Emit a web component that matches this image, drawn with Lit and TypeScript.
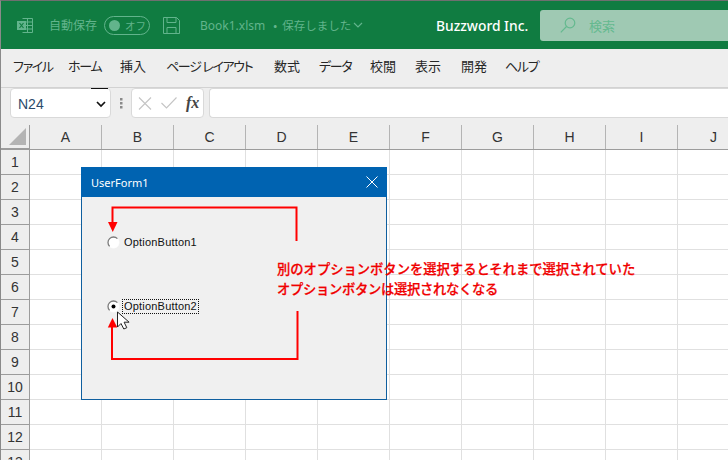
import { LitElement, html, svg, css } from "lit";
import { customElement } from "lit/decorators.js";

const COLS = ["A", "B", "C", "D", "E", "F", "G", "H", "I", "J"];
const ROWS = Array.from({ length: 13 }, (_, i) => i + 1);
const TABS = [
  ["ファイル", 55, true],
  ["ホーム", 52, true],
  ["挿入", 46, false],
  ["ページ レイアウト", 108, true],
  ["数式", 45, false],
  ["データ", 51, true],
  ["校閲", 45, false],
  ["表示", 46, false],
  ["開発", 44, false],
  ["ヘルプ", 50, true],
] as const;

@customElement("app-root")
export class AppRoot extends LitElement {
  static styles = css`
    :host {
      display: block;
      width: 728px;
      height: 460px;
      overflow: hidden;
      position: relative;
      background: #eeeeee;
      font-family: "Liberation Sans", "Noto Sans CJK JP", sans-serif;
      --faded: #62b48c;
    }
    .window {
      display: flex;
      flex-direction: column;
      height: 460px;
      border-left: 1px solid #8a8a8a;
      border-top: 1px solid #6f6f6f;
      box-sizing: border-box;
    }
    .title {
      height: 48px;
      flex: none;
      background: #107c41;
      display: flex;
      align-items: center;
      color: var(--faded);
      font-family: "Noto Sans CJK JP", sans-serif;
      font-size: 12px;
      padding-left: 16px;
      box-sizing: border-box;
    }
    .title svg { flex: none; display: block; }
    .autosave { margin-left: 15px; font-size: 12px; line-height: 16px; width: 48px; white-space: nowrap; }
    .toggle {
      margin-left: 7px;
      width: 46px;
      height: 19px;
      box-sizing: border-box;
      border: 1px solid var(--faded);
      border-radius: 10px;
      display: flex;
      align-items: center;
      padding-left: 4px;
      font-size: 10.5px;
      flex: none;
    }
    .knob { width: 11px; height: 11px; border-radius: 50%; background: var(--faded); margin-right: 5px; flex: none; }
    .save { margin-left: 13px; }
    .book { margin-left: 20px; font-size: 11.5px; white-space: nowrap; display: flex; align-items: center; width: 236px; }
    .book .bookname { font-family: "Noto Sans", sans-serif; font-size: 12px; }
    .book .bullet { margin-left: 8px; width: 9px; flex: none; }
    .book .chev { margin-left: 2px; }
    .company {
      color: #ffffff;
      font-family: "Noto Sans", sans-serif;
      font-weight: 500;
      font-size: 13.8px;
      width: 104px;
      flex: none;
      white-space: nowrap;
    }
    .search {
      flex: 1;
      height: 31px;
      background: #9fc9b3;
      border-radius: 3px 0 0 3px;
      display: flex;
      align-items: center;
      padding-left: 20px;
      gap: 13px;
      font-size: 13px;
      color: #64b98f;
    }
    .tabs {
      height: 39px;
      flex: none;
      box-sizing: border-box;
      border-bottom: 1px solid #d2d2d2;
      display: flex;
      align-items: center;
      padding: 0 0 5px 12px;
      font-family: "Noto Sans CJK JP", sans-serif;
      font-size: 13px;
      color: #262626;
      font-feature-settings: "palt";
    }
    .tab { white-space: nowrap; flex: none; }
    .tab.kana { letter-spacing: -1.3px; }
    .fbar {
      height: 30px;
      flex: none;
      display: flex;
      align-items: stretch;
      padding-left: 9px;
    }
    .namebox {
      width: 101px;
      box-sizing: border-box;
      background: #fff;
      border: 1px solid #d9d9d9;
      border-radius: 4px;
      display: flex;
      align-items: center;
      position: relative;
      padding: 2px 0 0 7px;
      font-size: 14px;
      color: #2b4a6b;
    }
    .namebox .chev { position: absolute; right: 4px; top: 12px; }
    .namebox .tick { position: absolute; right: 2px; top: -1px; width: 17px; height: 1px; background: #111; }
    .dots { width: 20px; flex: none; display: flex; align-items: center; justify-content: center; }
    .fxbox {
      width: 73px;
      box-sizing: border-box;
      background: #fff;
      border: 1px solid #d9d9d9;
      border-radius: 4px;
      display: flex;
      align-items: center;
      padding-left: 6px;
      gap: 9px;
      flex: none;
    }
    .fx {
      font-family: "Liberation Serif", serif;
      font-style: italic;
      font-weight: 700;
      font-size: 16px;
      color: #444;
    }
    .formula {
      flex: 1;
      margin-left: 5px;
      background: #fff;
      border: 1px solid #d9d9d9;
      border-right: none;
      border-radius: 4px 0 0 4px;
    }
    .sheet { flex: 1; margin-top: 7px; overflow: hidden; position: relative; background: #fff; }
    .row { display: flex; height: 25px; }
    .head { height: 25px; background: #eeeeee; border-bottom: 1px solid #9c9c9c; box-sizing: border-box; }
    .rowhead, .corner {
      width: 29px;
      flex: none;
      box-sizing: border-box;
      background: #eeeeee;
      border-right: 1px solid #9c9c9c;
      border-bottom: 1px solid #9c9c9c;
      display: flex;
      align-items: center;
      justify-content: center;
      font-size: 14px;
      color: #333;
    }
    .corner { align-items: flex-end; justify-content: flex-end; padding: 0 3px 3px 0; }
    .colhead {
      width: 72px;
      flex: none;
      box-sizing: border-box;
      border-right: 1px solid #b4b4b4;
      display: flex;
      align-items: center;
      justify-content: center;
      font-size: 14px;
      color: #333;
    }
    .cell {
      width: 72px;
      flex: none;
      box-sizing: border-box;
      border-right: 1px solid #e0e0e0;
      border-bottom: 1px solid #e0e0e0;
    }

    .form {
      position: absolute;
      left: 81px;
      top: 167px;
      width: 306px;
      height: 233px;
      box-sizing: border-box;
      border: 1px solid #0f5f9f;
      border-top: none;
      background: #f0f0f0;
    }
    .formbar {
      height: 30px;
      margin: 0 -1px;
      background: #0063b1;
      color: #fff;
      font-family: "Noto Sans", sans-serif;
      font-size: 11px;
      display: flex;
      align-items: center;
      justify-content: space-between;
      padding: 0 9px 0 10px;
    }
    .opt {
      position: absolute;
      left: 25px;
      display: flex;
      align-items: center;
      font-family: "Liberation Sans", sans-serif;
      font-size: 11px;
      letter-spacing: 0.2px;
      color: #111;
      height: 15px;
    }
    .opt1 { top: 68px; }
    .opt2 { top: 132px; }
    .radio { flex: none; display: block; }
    .opt span { margin-left: 2px; padding: 0 1px; border: 1px dotted transparent; line-height: 13px; white-space: nowrap; }
    .opt.on span { border-color: #111; }
    .overlay { position: absolute; left: 0; top: 0; pointer-events: none; }
    .note {
      position: absolute;
      left: 277px;
      top: 259px;
      color: #f00000;
      font-family: "Noto Sans CJK JP", sans-serif;
      font-weight: 500;
      font-size: 13.3px;
      line-height: 20px;
      white-space: nowrap;
      -webkit-text-stroke: 0.25px #f00000;
    }
    .note div + div { letter-spacing: -0.3px; }
  `;

  private radio(on: boolean) {
    return html`<svg class="radio" width="13" height="13" viewBox="0 0 13 13">
      <circle cx="6.500" cy="6.500" r="5.500" fill="#fff" stroke="#fff" stroke-width="1"/>
      <path d="M2.600 10.400A5.500 5.500 0 0 1 10.400 2.600" fill="none" stroke="#7a7a7a" stroke-width="1.300"/>
      ${on ? svg`<circle cx="6.500" cy="6.500" r="2" fill="#000"/>` : ""}
    </svg>`;
  }

  render() {
    return html`
      <div class="window">
        <div class="title">
          <svg width="17" height="17" viewBox="0 0 17 17" fill="none" stroke="#62b48c">
            <path d="M5.500 1.500h10v14h-10M5.500 5h10M5.500 8.500h10M5.500 12h10M10.500 1.500v14"/>
            <rect x="0" y="4" width="9" height="9" fill="#62b48c" stroke="none"/>
            <path d="M2.500 6l4 5M6.500 6l-4 5" stroke="#107c41" stroke-width="1.200"/>
          </svg>
          <div class="autosave">自動保存</div>
          <div class="toggle"><i class="knob"></i>オフ</div>
          <svg class="save" width="17" height="17" viewBox="0 0 17 17" fill="none" stroke="#62b48c">
            <path d="M0.500 0.500h13l3 3v13h-16zM4 0.500v5h9v-5M4 16.500v-6h9v6"/>
          </svg>
          <div class="book">
            <span class="bookname">Book1.xlsm</span>
            <span class="bullet">•</span>
            <span>保存しました</span>
            <svg class="chev" width="10" height="6" viewBox="0 0 10 6" fill="none" stroke="#62b48c" stroke-width="1.200"><path d="M1 1l4 4 4-4"/></svg>
          </div>
          <div class="company">Buzzword Inc.</div>
          <div class="search">
            <svg width="16" height="16" viewBox="0 0 16 16" fill="none" stroke="#64b98f" stroke-width="1.200">
              <circle cx="10" cy="6" r="4.800"/><path d="M6.500 9.500L0.800 15.300"/>
            </svg>
            <span>検索</span>
          </div>
        </div>

        <div class="tabs">
          ${TABS.map(([t, w, k]) => html`<div class="tab ${k ? "kana" : ""}" style="width:${w}px">${t}</div>`)}
        </div>

        <div class="fbar">
          <div class="namebox">
            N24
            <i class="tick"></i>
            <svg class="chev" width="10" height="7" viewBox="0 0 10 7" fill="none" stroke="#111" stroke-width="1.700"><path d="M1 1l4 4 4-4"/></svg>
          </div>
          <div class="dots">
            <svg width="3" height="11" viewBox="0 0 3 11" fill="#8a8a8a"><rect y="0" width="2.500" height="2.500"/><rect y="4" width="2.500" height="2.500"/><rect y="8" width="2.500" height="2.500"/></svg>
          </div>
          <div class="fxbox">
            <svg width="14" height="13" viewBox="0 0 14 13" fill="none" stroke="#c4c4c4" stroke-width="1.100"><path d="M1 0.500l12 12M13 0.500l-12 12"/></svg>
            <svg width="16" height="12" viewBox="0 0 16 12" fill="none" stroke="#c4c4c4" stroke-width="1.100"><path d="M0.500 6l5 5L15.500 0.500"/></svg>
            <span class="fx">fx</span>
          </div>
          <div class="formula"></div>
        </div>

        <div class="sheet">
          <div class="row head">
            <div class="corner">
              <svg width="17" height="17" viewBox="0 0 17 17"><path d="M17 0v17H0z" fill="#b4b4b4"/></svg>
            </div>
            ${COLS.map((c) => html`<div class="colhead">${c}</div>`)}
          </div>
          ${ROWS.map(
            (r) => html`<div class="row">
              <div class="rowhead">${r}</div>
              ${COLS.map(() => html`<div class="cell"></div>`)}
            </div>`
          )}
        </div>
      </div>

      <div class="form">
        <div class="formbar">
          <span>UserForm1</span>
          <svg width="12" height="12" viewBox="0 0 12 12" fill="none" stroke="#fff" stroke-width="1"><path d="M0.500 0.500l11 11M11.500 0.500l-11 11"/></svg>
        </div>
        <div class="opt opt1">${this.radio(false)}<span>OptionButton1</span></div>
        <div class="opt opt2 on">${this.radio(true)}<span>OptionButton2</span></div>
      </div>

      <svg class="overlay" width="728" height="460" viewBox="0 0 728 460">
        <g fill="none" stroke="#ff0000" stroke-width="2">
          <path d="M296.500 241V207.500H112.500V223"/>
          <path d="M297.500 311V359H112V327"/>
        </g>
        <path d="M108 222h9.500l-4.750 10z" fill="#ff0000"/>
        <path d="M112.500 318l4.800 9.500H107.800z" fill="#ff0000"/>
        <path d="M117.500 312v15l3.500-3.500 2.800 5.500 3-1.300-2.700-5.500h5z" fill="#fff" stroke="#222" stroke-width="1" stroke-linejoin="round"/>
      </svg>

      <div class="note"><div>別のオプションボタンを選択するとそれまで選択されていた</div><div>オプションボタンは選択されなくなる</div></div>
    `;
  }
}
